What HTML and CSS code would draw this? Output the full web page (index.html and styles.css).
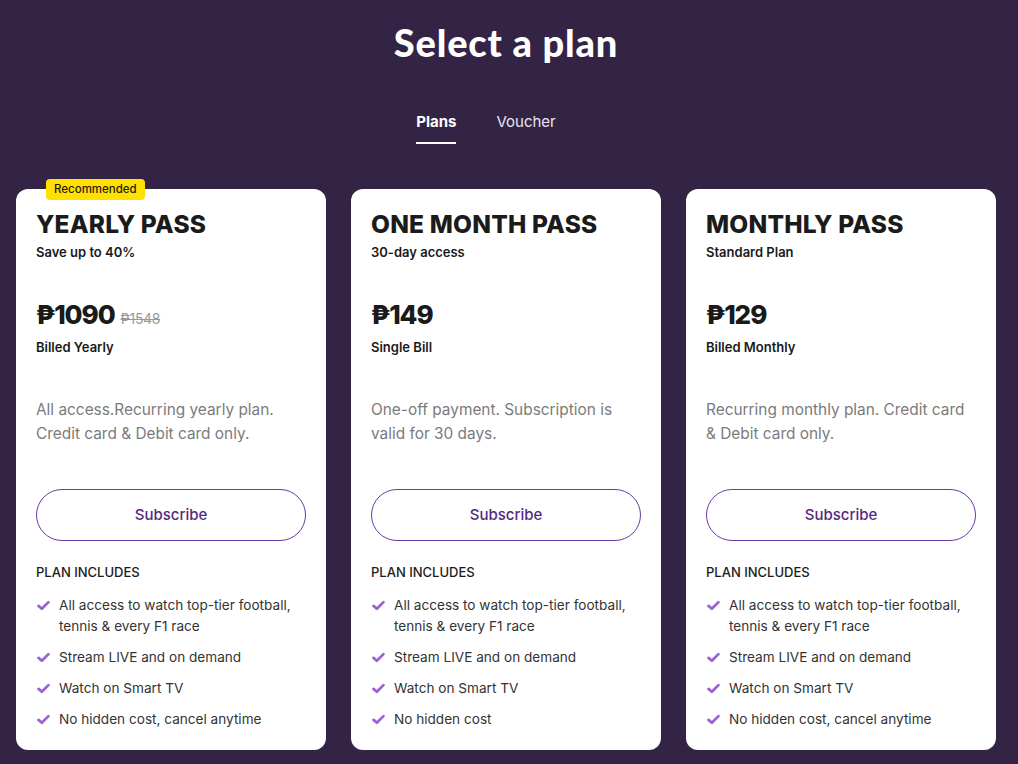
FILE: index.html
```html
<!DOCTYPE html>
<html lang="en">
<head>
<meta charset="utf-8">
<title>Select a plan</title>
<link rel="stylesheet" href="styles.css">
</head>
<body>
<svg width="0" height="0" class="defs" aria-hidden="true">
  <defs>
    <symbol id="chk" viewBox="0 0 14 12">
      <path d="M1.6 6.4 L5.2 9.6 L12.4 2.3" fill="none" stroke="#9b63d1" stroke-width="3" stroke-linecap="round" stroke-linejoin="round"/>
    </symbol>
  </defs>
</svg>
<main class="page">
  <h1 class="heading">Select a plan</h1>
  <nav class="tabs">
    <span class="tab active">Plans</span>
    <span class="tab">Voucher</span>
  </nav>
  <section class="cards">
    <article class="card">
      <span class="badge">Recommended</span>
      <h2 class="title">YEARLY PASS</h2>
      <p class="sub">Save up to 40%</p>
      <p class="price">₱1090 <s class="old">₱1548</s></p>
      <p class="billed">Billed Yearly</p>
      <p class="desc">All access.Recurring yearly plan. Credit card &amp; Debit card only.</p>
      <button class="btn">Subscribe</button>
      <p class="inc">PLAN INCLUDES</p>
      <ul class="list">
        <li><svg class="ic"><use href="#chk"/></svg><span>All access to watch top-tier football, tennis &amp; every F1 race</span></li>
        <li><svg class="ic"><use href="#chk"/></svg><span>Stream LIVE and on demand</span></li>
        <li><svg class="ic"><use href="#chk"/></svg><span>Watch on Smart TV</span></li>
        <li><svg class="ic"><use href="#chk"/></svg><span>No hidden cost, cancel anytime</span></li>
      </ul>
    </article>
    <article class="card">
      <h2 class="title">ONE MONTH PASS</h2>
      <p class="sub">30-day access</p>
      <p class="price">₱149</p>
      <p class="billed">Single Bill</p>
      <p class="desc">One-off payment. Subscription is valid for 30 days.</p>
      <button class="btn">Subscribe</button>
      <p class="inc">PLAN INCLUDES</p>
      <ul class="list">
        <li><svg class="ic"><use href="#chk"/></svg><span>All access to watch top-tier football, tennis &amp; every F1 race</span></li>
        <li><svg class="ic"><use href="#chk"/></svg><span>Stream LIVE and on demand</span></li>
        <li><svg class="ic"><use href="#chk"/></svg><span>Watch on Smart TV</span></li>
        <li><svg class="ic"><use href="#chk"/></svg><span>No hidden cost</span></li>
      </ul>
    </article>
    <article class="card">
      <h2 class="title">MONTHLY PASS</h2>
      <p class="sub">Standard Plan</p>
      <p class="price">₱129</p>
      <p class="billed">Billed Monthly</p>
      <p class="desc">Recurring monthly plan. Credit card &amp; Debit card only.</p>
      <button class="btn">Subscribe</button>
      <p class="inc">PLAN INCLUDES</p>
      <ul class="list">
        <li><svg class="ic"><use href="#chk"/></svg><span>All access to watch top-tier football, tennis &amp; every F1 race</span></li>
        <li><svg class="ic"><use href="#chk"/></svg><span>Stream LIVE and on demand</span></li>
        <li><svg class="ic"><use href="#chk"/></svg><span>Watch on Smart TV</span></li>
        <li><svg class="ic"><use href="#chk"/></svg><span>No hidden cost, cancel anytime</span></li>
      </ul>
    </article>
  </section>
</main>
</body>
</html>
```
FILE: styles.css
```css
* { box-sizing: border-box; }
html, body { margin: 0; padding: 0; }
body {
  background: #332446;
  font-family: "Inter", "Noto Sans", "DejaVu Sans", sans-serif;
  color: #1a1a1a;
  height: 764px;
  overflow: hidden;
}
.defs { position: absolute; width: 0; height: 0; }
.page { padding-top: 20px; }
.heading {
  margin: 0;
  text-align: center;
  color: #fff;
  font-family: "Lato", "Noto Sans", sans-serif;
  font-weight: 900;
  font-size: 38px;
  line-height: 44px;
  letter-spacing: 0.8px;
  padding-right: 6px;
}
.tabs {
  display: flex;
  justify-content: center;
  gap: 40px;
  margin-top: 48px;
  padding-right: 46px;
}
.tab {
  color: #e9e4f0;
  font-size: 15px;
  line-height: 20px;
  padding-bottom: 10px;
  border-bottom: 2px solid transparent;
}
.tab.active {
  color: #fff;
  font-weight: 700;
  border-bottom-color: #fff;
}
.cards {
  display: grid;
  grid-template-columns: repeat(3, 310px);
  gap: 25px;
  padding: 0 16px;
  margin-top: 45px;
}
.card {
  position: relative;
  background: #fff;
  border-radius: 12px;
  padding: 20px 20px 20px;
  display: flex;
  flex-direction: column;
}
.badge {
  position: absolute;
  top: -10px;
  left: 30px;
  background: #ffe000;
  color: #1f1a10;
  font-size: 11.5px;
  font-weight: 500;
  line-height: 21px;
  padding: 0 8px;
  border-radius: 4px;
}
.title {
  margin: 0;
  font-size: 24.5px;
  line-height: 30px;
  font-weight: 800;
  color: #1b1b1b;
  letter-spacing: 0.2px;
}
.sub {
  margin: 4px 0 0;
  font-size: 13px;
  line-height: 18px;
  font-weight: 600;
}
.price {
  margin: 37px 0 0;
  font-size: 26px;
  line-height: 34px;
  font-weight: 800;
  letter-spacing: -1px;
}
.old {
  font-size: 14px;
  line-height: 1;
  font-weight: 400;
  color: #9a9a9a;
  letter-spacing: -0.3px;
  margin-left: 1px;
}
.billed {
  margin: 6px 0 0;
  font-size: 13px;
  line-height: 18px;
  font-weight: 600;
}
.desc {
  margin: 42px 0 0;
  font-size: 15.4px;
  line-height: 24px;
  color: #7b7b7b;
  min-height: 48px;
}
.btn {
  margin-top: 43px;
  height: 52px;
  width: 100%;
  border: 1px solid #6b3aa6;
  border-radius: 26px;
  background: #fff;
  color: #55287f;
  font-family: inherit;
  font-size: 15px;
  font-weight: 500;
  padding-bottom: 2px;
}
.inc {
  margin: 22px 0 0;
  font-size: 13px;
  line-height: 18px;
  font-weight: 500;
  color: #1b1b1b;
}
.list {
  list-style: none;
  margin: 14px 0 0;
  padding: 0;
  display: flex;
  flex-direction: column;
  gap: 10px;
}
.list li {
  display: flex;
  gap: 9px;
  font-size: 13.6px;
  line-height: 21px;
  color: #333;
  padding-left: 1px;
}
.ic {
  flex: none;
  width: 13px;
  height: 11px;
  margin-top: 5px;
}
```
